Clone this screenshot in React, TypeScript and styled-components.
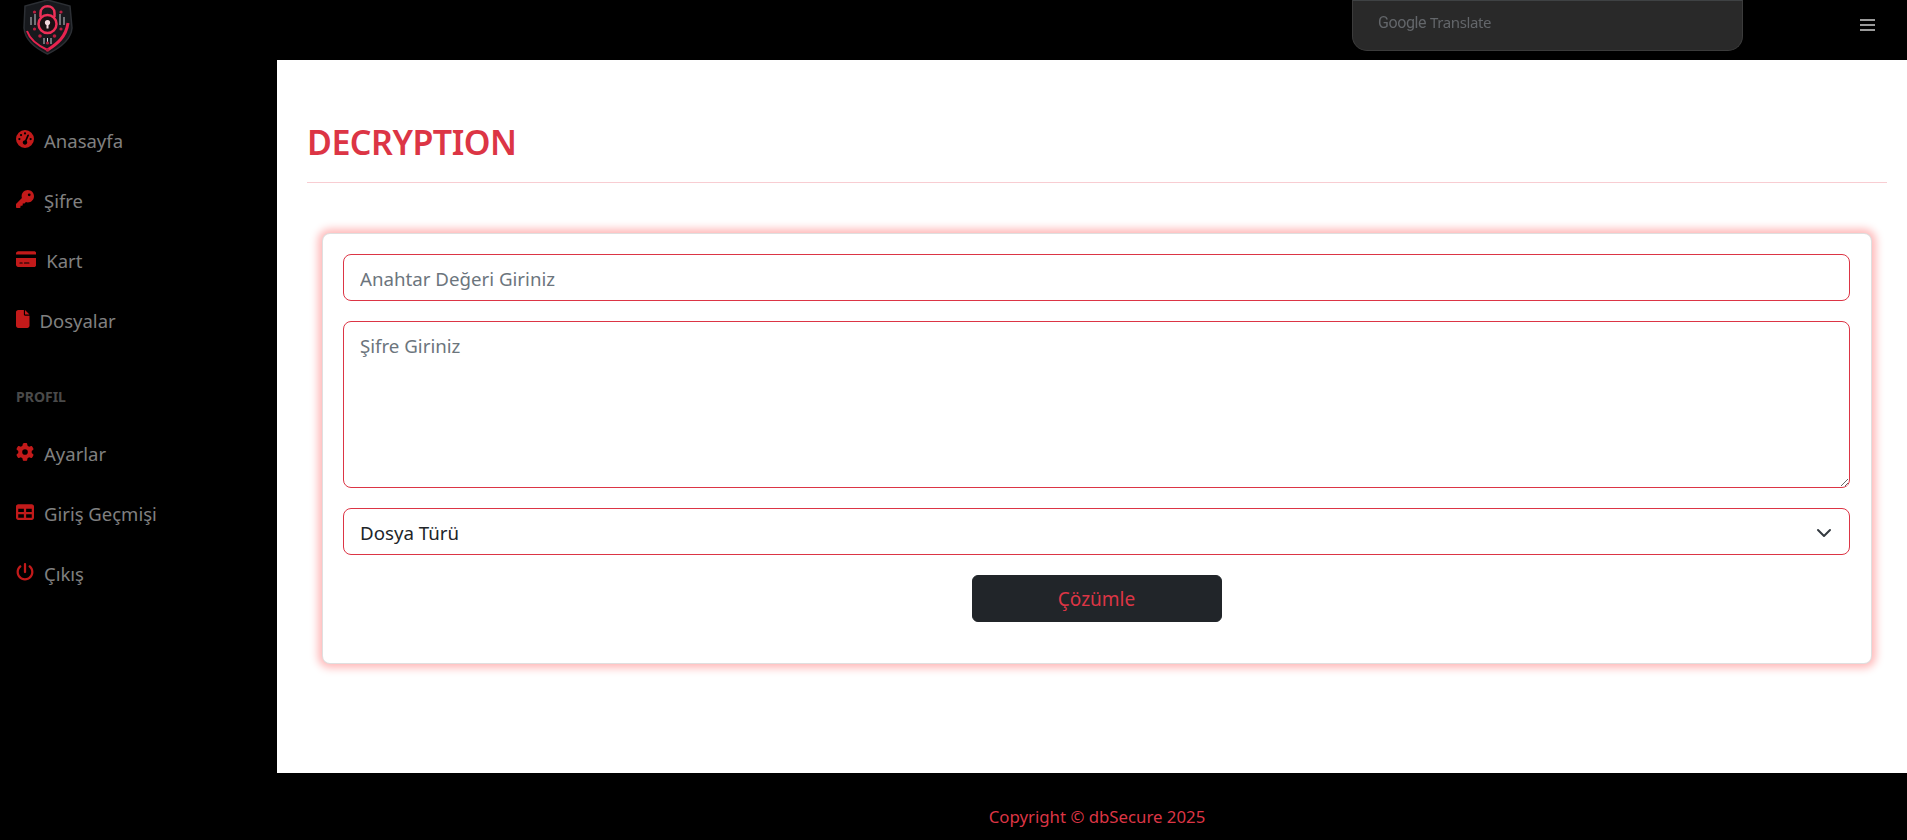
import React from 'react';
import styled, { createGlobalStyle } from 'styled-components';
import { FaGaugeHigh, FaKey, FaCreditCard, FaFile, FaGear, FaTable, FaPowerOff } from 'react-icons/fa6';

const GlobalStyle = createGlobalStyle`
  * { box-sizing: border-box; }
  html, body { margin: 0; padding: 0; background: #000; }
  body { font-family: "Noto Sans", "Open Sans", sans-serif; }
`;

const Shell = styled.div`
  display: grid;
  grid-template-columns: 277px 1fr;
  grid-template-rows: 60px 713px 67px;
  width: 100%;
  height: 840px;
  overflow: hidden;
  background: #000;
`;

const Header = styled.header`
  grid-column: 1 / 3;
  display: flex;
  align-items: flex-start;
  background: #000;
`;

const LogoMark = styled.svg`
  display: block;
  width: 52px;
  height: 55px;
  margin-left: 22px;
`;

const TranslatePanel = styled.div`
  width: 391px;
  height: 51px;
  margin-left: auto;
  padding: 11px 0 0 25px;
  background: #292929;
  border: 1px solid #3b3b3b;
  border-top-color: #3f4244;
  border-radius: 0 0 15px 15px;
  color: #63666a;
  font-size: 15px;
  line-height: 20px;
  letter-spacing: -0.4px;
  filter: blur(0.3px);
`;

const GoogleWord = styled.span`
  font-family: "Roboto", sans-serif;
  font-size: 16px;
  margin-right: 4px;
`;

const MenuToggle = styled.div`
  display: flex;
  flex-direction: column;
  gap: 3px;
  width: 15px;
  margin: 19px 32px 0 117px;
`;

const MenuBar = styled.span`
  display: block;
  height: 2px;
  background: #9a9a9a;
`;

const Sidebar = styled.nav`
  grid-row: 2 / 4;
  display: flex;
  flex-direction: column;
  padding: 50px 0 0 16px;
  background: #000;
`;

const NavItem = styled.a`
  display: flex;
  align-items: center;
  gap: 10px;
  height: 60px;
  color: #808080;
  font-size: 18.5px;
  text-decoration: none;
`;

const NavIcon = styled.span<{ $width: number }>`
  display: flex;
  flex: none;
  width: ${(p) => p.$width}px;
  height: 18px;
  margin-top: -3px;
  color: #c21a1a;

  svg {
    width: 100%;
    height: 100%;
  }
`;

const NavHeading = styled.div`
  margin: 39px 0 18px;
  height: 16px;
  color: #4a4a4a;
  font-size: 14px;
  line-height: 16px;
  font-weight: 700;
`;

const Main = styled.main`
  padding: 63px 20px 0 30px;
  background: #fff;
`;

const PageTitle = styled.h1`
  margin: 0;
  padding-bottom: 21px;
  border-bottom: 1px solid #f8cdd2;
  color: #dc3545;
  font-size: 34px;
  line-height: 38px;
  font-weight: 600;
  letter-spacing: -0.5px;
`;

const FormCard = styled.form`
  display: flex;
  flex-direction: column;
  gap: 20px;
  margin: 50px 15px 0 15px;
  padding: 20px 21px 0 20px;
  height: 431px;
  background: #fff;
  border: 1px solid rgba(0, 0, 0, 0.125);
  border-radius: 8px;
  box-shadow: 0 0 8px 4px #ffb8b8;
`;

const fieldStyles = `
  display: block;
  width: 100%;
  padding: 2px 16px 0;
  border: 1px solid #dc3545;
  border-radius: 8px;
  background-color: #fff;
  font-family: inherit;
  font-size: 18.7px;
  outline: none;

  &::placeholder {
    color: #6c757d;
    opacity: 1;
  }
`;

const TextField = styled.input`
  ${fieldStyles}
  height: 47px;
`;

const TextArea = styled.textarea`
  ${fieldStyles}
  height: 167px;
  padding-top: 10px;
  line-height: 28px;
  resize: vertical;
`;

const SelectBox = styled.div`
  ${fieldStyles}
  display: flex;
  align-items: center;
  justify-content: space-between;
  height: 47px;
  color: #212529;
`;

const Chevron = styled.svg`
  width: 16px;
  height: 16px;
  margin-right: 1px;
`;

const SubmitButton = styled.button`
  align-self: center;
  width: 250px;
  height: 47px;
  border: 1px solid #212529;
  border-radius: 6px;
  background: #212529;
  color: #dc3545;
  font-family: inherit;
  font-size: 19px;
`;

const Footer = styled.footer`
  display: flex;
  align-items: center;
  justify-content: center;
  padding: 20px 0 0 10px;
  background: #000;
  color: #dc3545;
  font-size: 16.8px;
`;

// shield with padlock, traced by eye from the logo in the reference
const Logo = () => (
  <LogoMark viewBox="0 0 52 55" aria-hidden="true">
    <path d="M25.5 0 L48 6 L50 28 C49 40 38 48 25.5 54 C13 48 3 40 2 28 L3 6 Z" fill="#17191d" stroke="#2c2f34" strokeWidth="1.5" />
    <path d="M46 23 C44 37 35 44 25.5 50" fill="none" stroke="#e8234f" strokeWidth="3" />
    <path d="M5 31 C8 40 17 46 25.5 50" fill="none" stroke="#e8234f" strokeWidth="2" />
    <path d="M18.5 17 V13 C18.5 4 32.5 4 32.5 13 V17" fill="none" stroke="#ec2f57" strokeWidth="2.5" />
    <circle cx="25.5" cy="24" r="9" fill="#1a1014" stroke="#ec2f57" strokeWidth="2.5" />
    <circle cx="25.5" cy="22.5" r="2.6" fill="#f3d9df" />
    <rect x="24.5" y="23" width="2" height="5.5" fill="#f3d9df" />
    <path d="M9 17 V25 M13 14 V25 M38 14 V25 M42 17 V25 M22 38 V44 M25.5 38 V44 M29 38 V44" stroke="#c9ccd2" strokeWidth="1" />
    <g fill="#b81e40">
      <circle cx="12.5" cy="12" r="1.6" />
      <circle cx="39" cy="12" r="1.6" />
      <circle cx="12.5" cy="29" r="1.6" />
      <circle cx="39" cy="29" r="1.6" />
      <circle cx="18" cy="36" r="1.8" />
      <circle cx="32.5" cy="36" r="1.8" />
      <circle cx="25.5" cy="43" r="1.5" />
      <circle cx="25.5" cy="50" r="1.8" />
    </g>
  </LogoMark>
);

const mainLinks = [
  { label: 'Anasayfa', icon: <FaGaugeHigh />, width: 18 },
  { label: 'Şifre', icon: <FaKey />, width: 18 },
  { label: 'Kart', icon: <FaCreditCard />, width: 20.25 },
  { label: 'Dosyalar', icon: <FaFile />, width: 13.5 },
];

const profileLinks = [
  { label: 'Ayarlar', icon: <FaGear />, width: 18 },
  { label: 'Giriş Geçmişi', icon: <FaTable />, width: 18 },
  { label: 'Çıkış', icon: <FaPowerOff />, width: 18 },
];

const App = () => {
  return (
    <Shell>
      <GlobalStyle />
      <Header>
        <Logo />
        <TranslatePanel>
          <GoogleWord>Google</GoogleWord>Translate
        </TranslatePanel>
        <MenuToggle>
          <MenuBar />
          <MenuBar />
          <MenuBar />
        </MenuToggle>
      </Header>
      <Sidebar>
        {mainLinks.map((link) => (
          <NavItem key={link.label}>
            <NavIcon $width={link.width}>{link.icon}</NavIcon>
            <span>{link.label}</span>
          </NavItem>
        ))}
        <NavHeading>PROFIL</NavHeading>
        {profileLinks.map((link) => (
          <NavItem key={link.label}>
            <NavIcon $width={link.width}>{link.icon}</NavIcon>
            <span>{link.label}</span>
          </NavItem>
        ))}
      </Sidebar>
      <Main>
        <PageTitle>DECRYPTION</PageTitle>
        <FormCard>
          <TextField placeholder="Anahtar Değeri Giriniz" />
          <TextArea placeholder="Şifre Giriniz" />
          <SelectBox>
            Dosya Türü
            <Chevron viewBox="0 0 16 16">
              <path fill="none" stroke="#343a40" strokeLinecap="round" strokeLinejoin="round" strokeWidth="2" d="m2 5 6 6 6-6" />
            </Chevron>
          </SelectBox>
          <SubmitButton type="button">Çözümle</SubmitButton>
        </FormCard>
      </Main>
      <Footer>Copyright © dbSecure 2025</Footer>
    </Shell>
  );
};

export default App;
